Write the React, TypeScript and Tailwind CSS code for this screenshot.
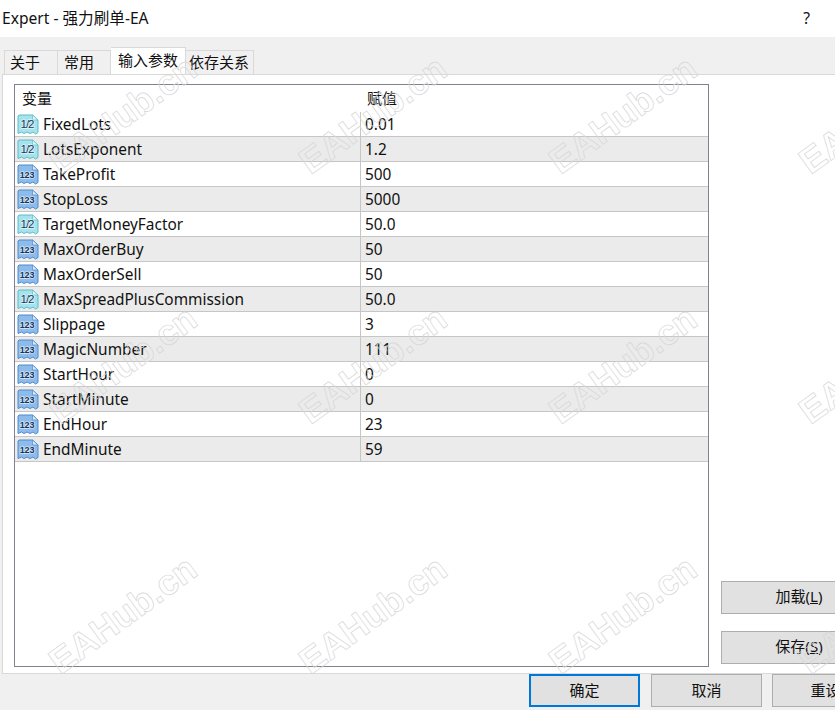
import React from 'react';

const font = { fontFamily: '"Noto Sans", "Noto Sans CJK SC", sans-serif' };

const params: { name: string; value: string; kind: 'f' | 'i' }[] = [
  { name: 'FixedLots', value: '0.01', kind: 'f' },
  { name: 'LotsExponent', value: '1.2', kind: 'f' },
  { name: 'TakeProfit', value: '500', kind: 'i' },
  { name: 'StopLoss', value: '5000', kind: 'i' },
  { name: 'TargetMoneyFactor', value: '50.0', kind: 'f' },
  { name: 'MaxOrderBuy', value: '50', kind: 'i' },
  { name: 'MaxOrderSell', value: '50', kind: 'i' },
  { name: 'MaxSpreadPlusCommission', value: '50.0', kind: 'f' },
  { name: 'Slippage', value: '3', kind: 'i' },
  { name: 'MagicNumber', value: '111', kind: 'i' },
  { name: 'StartHour', value: '0', kind: 'i' },
  { name: 'StartMinute', value: '0', kind: 'i' },
  { name: 'EndHour', value: '23', kind: 'i' },
  { name: 'EndMinute', value: '59', kind: 'i' },
];

// note icon with folded corner and torn lower edge
function ParamIcon({ kind }: { kind: 'f' | 'i' }) {
  const fill = kind === 'f' ? '#a6e3ec' : '#8dbcec';
  const edge = kind === 'f' ? '#5bbccd' : '#4f8acb';
  const fold = kind === 'f' ? '#e2f7f9' : '#dbe9f8';
  return (
    <svg width="22" height="23" viewBox="0 0 22 23" className="shrink-0">
      <path
        d="M2 2 H15.5 L21 7 V19.5 L18.5 21 L16 19 L13 20.5 L10 19 L7 20.5 L4.5 19 L1 20.5 V3 Z"
        fill={fill}
        stroke={edge}
        strokeWidth="1"
      />
      <path d="M15.5 2 V7 H21 Z" fill={fold} stroke={edge} strokeWidth="0.7" />
      <text
        x="10"
        y="15"
        textAnchor="middle"
        fontSize={kind === 'f' ? 11.5 : 9}
        fontWeight={kind === 'f' ? 400 : 700}
        letterSpacing={kind === 'f' ? -1 : -0.2}
        fill="#17375c"
        stroke="#ffffff"
        strokeOpacity="0.6"
        strokeWidth="1.5"
        paintOrder="stroke"
        fontFamily="Liberation Sans, sans-serif"
      >
        {kind === 'f' ? '1/2' : '123'}
      </text>
    </svg>
  );
}

function DlgButton({ label, focused, className }: { label: React.ReactNode; focused?: boolean; className?: string }) {
  return (
    <div
      className={`flex h-[33px] shrink-0 items-center justify-center bg-[#e1e1e1] text-[15px] text-[#111] ${
        focused ? 'border-2 border-[#0078d7]' : 'border border-[#adadad]'
      } ${className ?? 'w-[111px]'}`}
    >
      {label}
    </div>
  );
}

const marks: [string, string][] = [
  ['left-[123px]', 'top-[115px]'],
  ['left-[373px]', 'top-[115px]'],
  ['left-[623px]', 'top-[115px]'],
  ['left-[873px]', 'top-[115px]'],
  ['left-[123px]', 'top-[365px]'],
  ['left-[373px]', 'top-[365px]'],
  ['left-[623px]', 'top-[365px]'],
  ['left-[873px]', 'top-[365px]'],
  ['left-[123px]', 'top-[615px]'],
  ['left-[373px]', 'top-[615px]'],
  ['left-[623px]', 'top-[615px]'],
  ['left-[873px]', 'top-[615px]'],
];

export default function App() {
  return (
    <div className="relative flex h-[710px] w-[835px] flex-col overflow-hidden bg-[#f0f0f0] text-[15.4px] text-[#111]" style={font}>
      {/* title bar */}
      <div className="flex h-[37px] shrink-0 items-center justify-between bg-white pl-[2px] pr-[25px] text-[15.6px]">
        <span>Expert - 强力刷单-EA</span>
        <span>?</span>
      </div>

      {/* tabs */}
      <div className="flex h-[37px] shrink-0 items-end pl-[4px] text-[15px]">
        <div className="flex h-[24px] w-[54px] items-center border border-b-0 border-[#d9d9d9] pl-[5px]">关于</div>
        <div className="flex h-[24px] w-[53px] items-center border border-b-0 border-l-0 border-[#d9d9d9] pl-[6px]">常用</div>
        <div className="flex h-[27px] w-[75px] items-center border border-b-0 border-l-0 border-[#d9d9d9] bg-white pb-[2px] pl-[7px]">输入参数</div>
        <div className="flex h-[24px] w-[68px] items-center border border-b-0 border-l-0 border-[#d9d9d9] pl-[3px]">依存关系</div>
      </div>

      {/* tab page */}
      <div className="ml-[2px] flex h-[600px] shrink-0 border-y border-l border-[#d9d9d9] bg-white pb-[6px] pl-[11px] pt-[9px]">
        <div className="flex w-[695px] shrink-0 flex-col border border-[#82828e]">
          <div className="flex h-[27px] shrink-0 items-center text-[15px]">
            <div className="w-[345px] pl-[7px]">变量</div>
            <div className="pl-[7px]">赋值</div>
          </div>
          {params.map((p, i) => (
            <div key={p.name} className={`flex h-[25px] shrink-0 items-center border-b border-[#c6c6c6] ${i % 2 ? 'bg-[#ebebeb]' : 'bg-white'}`}>
              <div className="flex h-full w-[345px] items-center gap-[4px] pl-[2px]">
                <ParamIcon kind={p.kind} />
                <span className="pt-[2px]">{p.name}</span>
              </div>
              <div className="flex h-full items-center border-l border-[#c6c6c6] pl-[4px] pt-[2px]">{p.value}</div>
            </div>
          ))}
        </div>
        <div className="ml-[12px] flex flex-col justify-end gap-[17px] pb-[3px]">
          <DlgButton label={<span className="pb-[2px]">加载(<u>L</u>)</span>} className="w-[156px]" />
          <DlgButton label={<span className="pb-[2px]">保存(<u>S</u>)</span>} className="w-[156px]" />
        </div>
      </div>

      {/* bottom buttons */}
      <div className="flex shrink-0 pl-[529px]">
        <DlgButton label="确定" focused className="w-[111px]" />
        <DlgButton label="取消" className="ml-[11px] w-[111px]" />
        <DlgButton label="重设" className="ml-[10px] w-[107px]" />
      </div>

      {/* watermark */}
      {marks.map(([l, t], i) => (
        <div
          key={i}
          className={`pointer-events-none absolute ${l} ${t} -translate-x-1/2 -translate-y-1/2 -rotate-[36deg] whitespace-nowrap text-[36px] font-bold leading-none text-transparent [-webkit-text-stroke:0.7px_#d6d6d6] [font-family:'Liberation_Sans',sans-serif]`}
        >
          EAHub.cn
        </div>
      ))}
    </div>
  );
}
